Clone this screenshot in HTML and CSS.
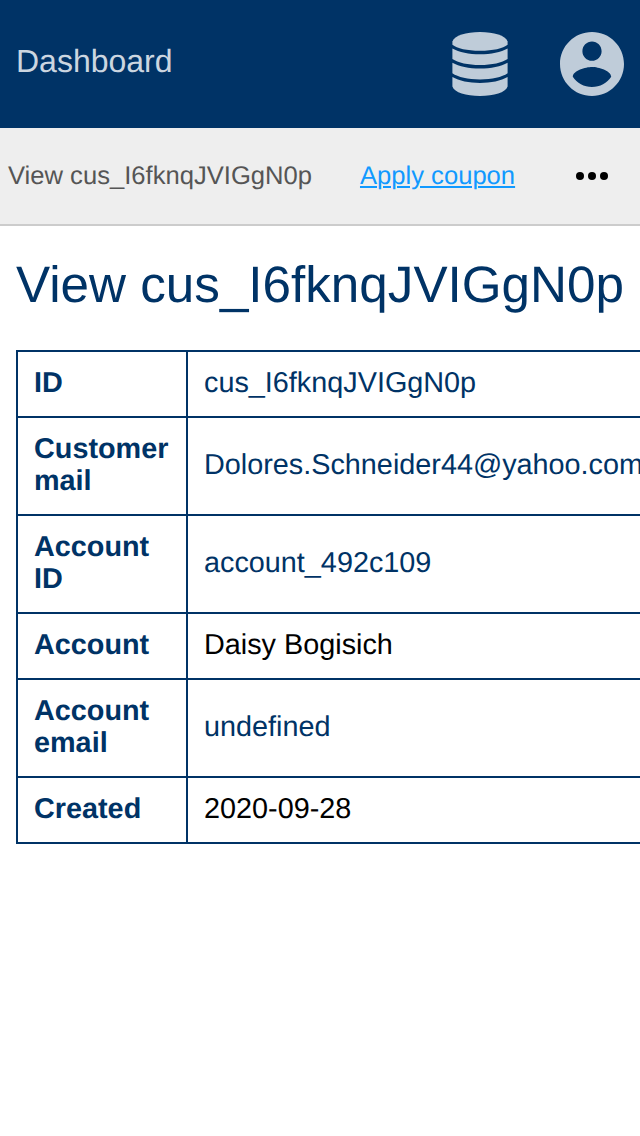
FILE: index.html
```html
<!DOCTYPE html>
<html lang="en">
<head>
<meta charset="utf-8">
<title>View cus_I6fknqJVIGgN0p</title>
<link rel="stylesheet" href="styles.css">
</head>
<body>
<header class="header">
  <a class="brand">Dashboard</a>
  <nav class="header-nav">
    <svg class="icon icon-db" viewBox="0 0 56 64" fill="currentColor"><path d="M0.4 9.5C2.500 3.500 14 0 28 0S53.500 3.500 55.600 9.500V12.800C51 16.600 41 18.800 28 18.800S5 16.600 0.400 12.800Z"/><path d="M0.400 16.500C7 20.300 17 22.300 28 22.300S49 20.300 55.600 16.500V27C50 30.800 40 33 28 33S6 30.800 0.400 27Z"/><path d="M0.400 30.800C7 34.600 17 36.600 28 36.600S49 34.600 55.600 30.800V41.300C50 45.200 40 47.400 28 47.400S6 45.200 0.400 41.300Z"/><path d="M0.400 45C7 48.900 17 50.900 28 50.900S49 48.900 55.600 45V54.500C53.500 60.500 42 64 28 64S2.500 60.500 0.400 54.500Z"/></svg>
    <svg class="icon icon-user" viewBox="2 2 20 20" fill="currentColor"><path d="M12 2C6.480 2 2 6.480 2 12s4.480 10 10 10 10-4.480 10-10S17.520 2 12 2zm0 3c1.660 0 3 1.340 3 3s-1.340 3-3 3-3-1.340-3-3 1.340-3 3-3zm0 14.200c-2.500 0-4.710-1.280-6-3.220.030-1.990 4-3.080 6-3.080 1.990 0 5.970 1.090 6 3.080-1.290 1.940-3.500 3.220-6 3.220z"/></svg>
  </nav>
</header>
<div class="toolbar">
  <span class="crumb">View cus_I6fknqJVIGgN0p</span>
  <a class="action">Apply coupon</a>
  <svg class="more" viewBox="0 0 32 8"><circle cx="4" cy="4" r="4"/><circle cx="16" cy="4" r="4"/><circle cx="28" cy="4" r="4"/></svg>
</div>
<main class="content">
  <h1 class="title">View cus_I6fknqJVIGgN0p</h1>
  <table class="details">
    <tr><th>ID</th><td>cus_I6fknqJVIGgN0p</td></tr>
    <tr><th>Customer mail</th><td>Dolores.Schneider44@yahoo.com</td></tr>
    <tr><th>Account ID</th><td>account_492c109</td></tr>
    <tr><th>Account</th><td class="plain">Daisy Bogisich</td></tr>
    <tr><th>Account email</th><td>undefined</td></tr>
    <tr><th>Created</th><td class="plain">2020-09-28</td></tr>
  </table>
</main>
</body>
</html>
```
FILE: styles.css
```css
* { box-sizing: border-box; }
body { margin: 0; background: #fff; color: #036; font-family: "Liberation Sans", Arial, sans-serif; overflow: hidden; text-rendering: geometricPrecision; }
.header { display: flex; align-items: center; justify-content: space-between; height: 128px; padding: 0 16px; background: #036; color: #bfccd9; }
.brand { padding-bottom: 6px; color: #ccd6e0; font-size: 32px; line-height: 36px; }
.header-nav { display: flex; align-items: center; gap: 52px; }
.icon { display: block; height: 64px; }
.icon-db { width: 56px; }
.icon-user { width: 64px; }
.toolbar { display: flex; align-items: center; height: 98px; padding: 0 32px 0 8px; background: #eee; border-bottom: 2px solid #ccc; font-size: 25.6px; line-height: 30px; white-space: nowrap; }
.crumb { color: #555; }
.action { margin-left: 48px; color: #19f; text-decoration: underline; text-decoration-thickness: 2px; text-underline-offset: 2px; }
.more { width: 32px; height: 8px; margin-left: auto; fill: #000; }
.content { padding: 30px 16px; }
.title { margin: 0 0 36px; font-size: 51.2px; font-weight: 400; line-height: 58px; white-space: nowrap; }
.details { width: 700px; table-layout: fixed; border-collapse: collapse; font-size: 28.8px; line-height: 32px; }
.details th, .details td { padding: 15px 16px 17px; border: 2px solid #036; text-align: left; }
.details th { width: 170px; }
.details .plain { color: #000; }
```
